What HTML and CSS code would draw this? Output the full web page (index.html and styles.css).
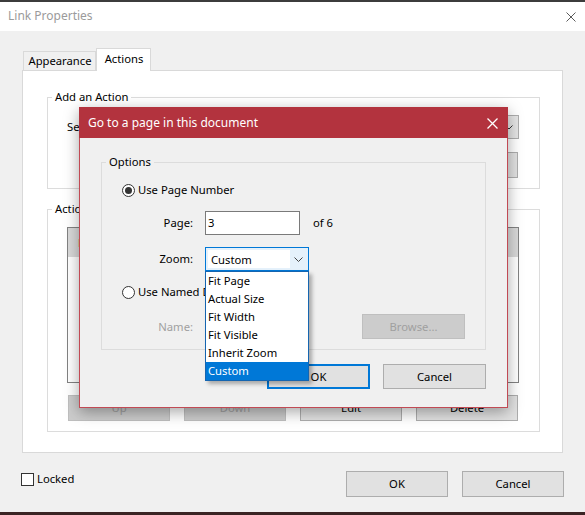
FILE: index.html
```html
<!DOCTYPE html>
<html>
<head>
<meta charset="utf-8">
<link rel="stylesheet" href="styles.css">
</head>
<body>
<div class="window">
  <div class="topstrip"></div>
  <div class="titlebar">
    <span class="title">Link Properties</span>
    <svg class="win-close" width="10" height="10" viewBox="0 0 10 10"><path d="M0.5 0.5L9.5 9.5M9.5 0.5L0.5 9.5" stroke="#5a5a5a" stroke-width="1" fill="none"/></svg>
  </div>
  <div class="content">
    <div class="tabs">
      <div class="tab">Appearance</div>
      <div class="tab active">Actions</div>
    </div>
    <div class="panel">
      <fieldset class="group g1">
        <legend>Add an Action</legend>
        <div class="select-row">
          <span class="lbl">Select Action:</span>
          <div class="combo-plain">
            <span>Go to a page view</span>
            <svg width="8" height="5" viewBox="0 0 8 5"><path d="M0.5 0.5L4 4L7.5 0.5" stroke="#333" fill="none"/></svg>
          </div>
        </div>
        <div class="add-row"><div class="btn">Add...</div></div>
      </fieldset>
      <fieldset class="group g2">
        <legend>Actions</legend>
        <div class="listbox">
          <div class="list-item sel">Mouse Up</div>
          <div class="list-item child">Go to a page 3 in this document</div>
        </div>
        <div class="btn-row">
          <div class="btn disabled">Up</div>
          <div class="btn disabled">Down</div>
          <div class="btn">Edit</div>
          <div class="btn">Delete</div>
        </div>
      </fieldset>
    </div>
    <div class="footer">
      <div class="check"><span class="box"></span><span>Locked</span></div>
      <div class="footer-btns">
        <div class="btn">OK</div>
        <div class="btn">Cancel</div>
      </div>
    </div>
  </div>
  <div class="bottomstrip"></div>

  <div class="modal">
    <div class="modal-head">
      <span>Go to a page in this document</span>
      <svg class="modal-close" width="11" height="11" viewBox="0 0 11 11"><path d="M0.5 0.5L10.5 10.5M10.5 0.5L0.5 10.5" stroke="#fff" stroke-width="1.3" fill="none"/></svg>
    </div>
    <div class="modal-body">
      <fieldset class="group options">
        <legend>Options</legend>
        <div class="radio-row first">
          <span class="radio checked"><span class="dot"></span></span>
          <span>Use Page Number</span>
        </div>
        <div class="field-row page-row">
          <span class="flabel">Page:</span>
          <div class="input">3</div>
          <span class="of">of 6</span>
        </div>
        <div class="field-row zoom-row">
          <span class="flabel">Zoom:</span>
          <div class="combo-open">
            <span class="combo-text">Custom</span>
            <span class="combo-arrow"><svg width="9" height="5" viewBox="0 0 9 5"><path d="M0.5 0.5L4.5 4.5L8.5 0.5" stroke="#444" fill="none"/></svg></span>
          </div>
        </div>
        <div class="radio-row second">
          <span class="radio"></span>
          <span>Use Named Destination</span>
        </div>
        <div class="field-row name-row">
          <span class="flabel muted">Name:</span>
          <div class="input disabled-input"></div>
          <div class="btn disabled browse">Browse...</div>
        </div>
      </fieldset>
      <div class="modal-btns">
        <div class="btn default">OK</div>
        <div class="btn">Cancel</div>
      </div>
    </div>
    <div class="dropdown">
      <div class="dd-item">Fit Page</div>
      <div class="dd-item">Actual Size</div>
      <div class="dd-item">Fit Width</div>
      <div class="dd-item">Fit Visible</div>
      <div class="dd-item">Inherit Zoom</div>
      <div class="dd-item selected">Custom</div>
    </div>
  </div>
</div>
</body>
</html>
```
FILE: styles.css
```css
* { box-sizing: border-box; }
html, body { margin: 0; padding: 0; }
body {
  font-family: "Noto Sans", "Open Sans", "DejaVu Sans", sans-serif;
  font-size: 11.25px;
  line-height: 16px;
  color: #000;
  background: #3a2a2a;
}
.window {
  position: relative;
  width: 585px;
  height: 515px;
  overflow: hidden;
  display: flex;
  flex-direction: column;
  background: #f0f0f0;
}
.topstrip { height: 2px; background: #3c3c3c; flex: none; }
.titlebar {
  height: 29px;
  flex: none;
  background: #fff;
  display: flex;
  align-items: center;
  padding-left: 8px;
  padding-right: 9px;
}
.title { color: #9b9b9b; flex: 1; font-size: 12px; padding-bottom: 1px; }
.win-close { display: block; margin-top: 1px; }

.content {
  flex: 1;
  padding-left: 22px;
  padding-top: 17px;
}
.bottomstrip { height: 3px; flex: none; background: #3b2424; }

.tabs {
  display: flex;
  align-items: flex-end;
  height: 22px;
  margin-left: 1px;
  position: relative;
  z-index: 1;
}
.tab {
  height: 19px;
  width: 73px;
  border: 1px solid #d9d9d9;
  border-bottom: none;
  background: #f0f0f0;
  text-align: center;
  line-height: 17px;
  padding-left: 1px;
}
.tab.active {
  height: 23px;
  width: 55px;
  margin-bottom: -1px;
  background: #fff;
  line-height: 19px;
  padding-left: 1px;
}
.panel {
  width: 541px;
  height: 383px;
  background: #fff;
  border: 1px solid #d9d9d9;
  padding-left: 24px;
}

.group {
  margin: 0;
  padding: 0;
  border: 1px solid #dcdcdc;
  min-width: 0;
}
.group legend {
  padding: 0 3px;
  margin-left: 4px;
  line-height: 16px;
}
.g1 legend, .g2 legend { margin-left: -15px; }
.g1 {
  width: 493px;
  margin-top: 18px;
  padding: 0 20px 10px 19px;
}
.select-row {
  margin-top: 10px;
  height: 24px;
  display: flex;
  align-items: center;
}
.lbl { width: 84px; flex: none; }
.combo-plain {
  flex: 1;
  height: 24px;
  background: #e5e5e5;
  border: 1px solid #adadad;
  display: flex;
  align-items: center;
  justify-content: space-between;
  padding: 0 5px 0 4px;
}
.combo-plain svg { display: block; }
.add-row {
  margin-top: 13px;
  display: flex;
  justify-content: flex-end;
  padding-right: 1px;
}
.g2 {
  width: 493px;
  margin-top: 12px;
  padding: 0 20px 10px 19px;
}
.listbox {
  margin-top: 10px;
  height: 156px;
  border: 1px solid #828282;
  background: #fff;
}
.list-item { height: 15px; line-height: 15px; padding-left: 10px; }
.list-item.sel { background: #d9d9d9; height: 29px; line-height: 29px; }
.list-item.child { padding-left: 28px; }
.btn-row {
  margin-top: 12px;
  display: flex;
  gap: 14px;
  padding-left: 1px;
}

.btn {
  width: 102px;
  height: 26px;
  background: #e1e1e1;
  border: 1px solid #adadad;
  display: flex;
  align-items: center;
  justify-content: center;
  flex: none;
}
.btn.disabled {
  background: #cccccc;
  border-color: #bfbfbf;
  color: #a0a0a0;
}

.footer {
  margin-top: 18px;
  display: flex;
  align-items: flex-start;
  justify-content: space-between;
  padding-right: 21px;
  margin-left: -1px;
}
.check { display: flex; align-items: center; margin-top: 0; }
.box {
  width: 13px;
  height: 13px;
  border: 1px solid #333;
  background: #fff;
  margin-right: 3px;
}
.footer-btns { display: flex; gap: 14px; }

/* modal */
.modal {
  position: absolute;
  left: 79px;
  top: 107px;
  width: 429px;
  height: 301px;
  background: #f0f0f0;
  border: 1px solid #c14a54;
  box-shadow: 0 4px 14px rgba(0,0,0,0.35);
}
.modal-head {
  height: 31px;
  margin: -1px -1px 0 -1px;
  background: #b3333e;
  color: #fff;
  font-size: 12px;
  display: flex;
  align-items: center;
  justify-content: space-between;
  padding: 0 10px 0 9px;
}
.modal-close { display: block; margin-top: 1px; }
.modal-body { padding-left: 21px; }
.options {
  width: 385px;
  margin-top: 16px;
  padding: 0 20px 10px 0;
}
.radio-row {
  height: 20px;
  display: flex;
  align-items: center;
  padding-left: 20px;
}
.radio-row.first { margin-top: 10px; }
.radio-row.second { margin-top: 11px; }
.radio {
  width: 13px;
  height: 13px;
  border: 1px solid #333;
  border-radius: 50%;
  background: #fff;
  margin-right: 3px;
  display: flex;
  align-items: center;
  justify-content: center;
}
.dot { width: 7px; height: 7px; border-radius: 50%; background: #333; }
.field-row {
  display: flex;
  align-items: center;
}
.page-row { margin-top: 11px; height: 24px; }
.zoom-row { margin-top: 12px; height: 24px; }
.name-row { margin-top: 12px; height: 25px; }
.flabel {
  width: 91px;
  text-align: right;
  margin-right: 12px;
  flex: none;
}
.flabel.muted { color: #a0a0a0; }
.input {
  width: 95px;
  height: 24px;
  border: 1px solid #7a7a7a;
  background: #fff;
  padding-left: 2px;
  line-height: 21px;
}
.disabled-input { width: 100px; border-color: #cccccc; background: #f0f0f0; }
.of { margin-left: 13px; }
.browse { width: 103px; height: 25px; margin-left: auto; color: #8d8d8d; }
.combo-open {
  width: 104px;
  height: 24px;
  border: 1px solid #0078d7;
  background: #e5f1fb;
  display: flex;
  padding: 2px;
}
.combo-text {
  width: 82px;
  background: #fff;
  padding-left: 3px;
  line-height: 19px;
}
.combo-arrow {
  flex: 1;
  display: flex;
  align-items: center;
  justify-content: center;
  padding-top: 1px;
}
.combo-arrow svg { display: block; }
.modal-btns {
  margin-top: 14px;
  display: flex;
  justify-content: flex-end;
  gap: 13px;
  padding-right: 21px;
}
.modal-btns .btn { width: 103px; height: 25px; }
.btn.default { border: 2px solid #0078d7; }

.dropdown {
  position: absolute;
  left: 125px;
  top: 163px;
  width: 104px;
  height: 110px;
  background: #fff;
  border: 1px solid #1565b0;
  box-shadow: 3px 3px 4px rgba(0,0,0,0.3);
}
.dd-item {
  height: 18px;
  line-height: 18px;
  padding-left: 2px;
}
.dd-item.selected { background: #0078d7; color: #fff; }
```
